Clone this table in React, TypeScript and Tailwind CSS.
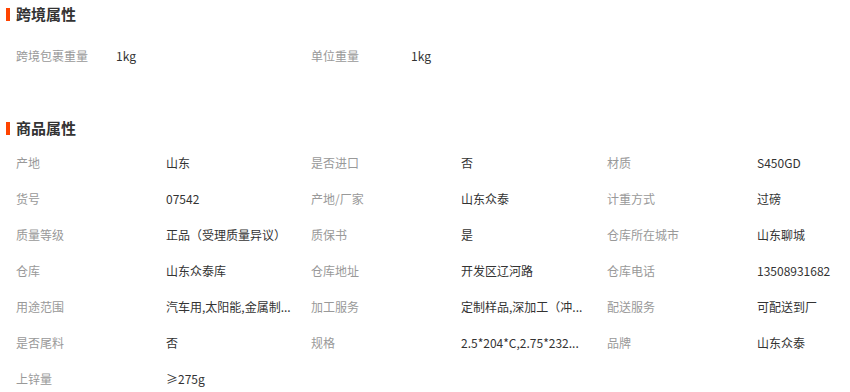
const font = { fontFamily: '"Microsoft YaHei", "Noto Sans CJK SC", sans-serif' };

const crossBorder = [
  { label: "跨境包裹重量", value: "1kg" },
  { label: "单位重量", value: "1kg" },
];

// long values are shown cut, as the page does
const goods = [
  ["产地", "山东"],
  ["是否进口", "否"],
  ["材质", "S450GD"],
  ["货号", "07542"],
  ["产地/厂家", "山东众泰"],
  ["计重方式", "过磅"],
  ["质量等级", "正品（受理质量异议）"],
  ["质保书", "是"],
  ["仓库所在城市", "山东聊城"],
  ["仓库", "山东众泰库"],
  ["仓库地址", "开发区辽河路"],
  ["仓库电话", "13508931682"],
  ["用途范围", "汽车用,太阳能,金属制..."],
  ["加工服务", "定制样品,深加工（冲..."],
  ["配送服务", "可配送到厂"],
  ["是否尾料", "否"],
  ["规格", "2.5*204*C,2.75*232..."],
  ["品牌", "山东众泰"],
  ["上锌量", "≥275g"],
];

function Heading({ title }: { title: string }) {
  return (
    <div className="flex h-7 items-center pl-[6px]">
      <span className="h-[13px] w-1 bg-[#ff4400]" />
      <span className="ml-[6px] text-[15px] font-bold text-[#333]">{title}</span>
    </div>
  );
}

export default function App() {
  return (
    <div className="h-[392px] w-[850px] overflow-hidden bg-white text-xs" style={font}>
      <Heading title="跨境属性" />
      <div className="mt-[10px] grid grid-cols-[295px_295px_1fr] pl-4">
        {crossBorder.map((it) => (
          <div key={it.label} className="flex h-9 items-center">
            <span className="w-[100px] shrink-0 text-[#999]">{it.label}</span>
            <span className="text-[#333]">{it.value}</span>
          </div>
        ))}
      </div>

      <div className="mt-10">
        <Heading title="商品属性" />
        <div className="mt-[3px] grid grid-cols-[295px_296px_1fr] pl-4">
          {goods.map(([label, value]) => (
            <div key={label} className="flex h-9 items-center">
              <span className="w-[150px] shrink-0 text-[#999]">{label}</span>
              <span className="whitespace-nowrap text-[#333]">{value}</span>
            </div>
          ))}
        </div>
      </div>
    </div>
  );
}
